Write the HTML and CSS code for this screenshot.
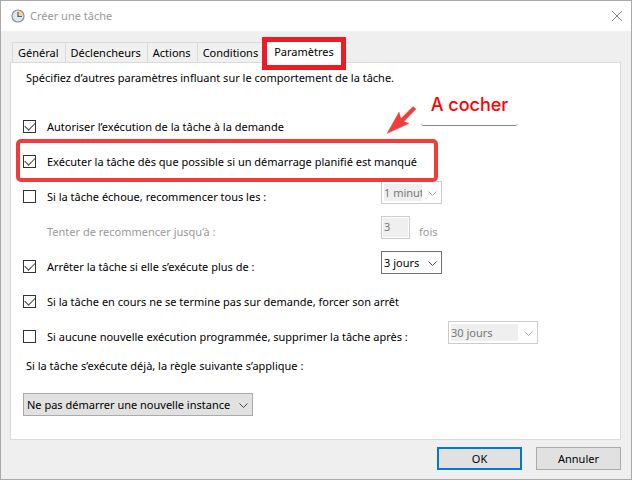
FILE: index.html
```html
<!DOCTYPE html>
<html lang="fr">
<head>
  <meta charset="UTF-8">
  <meta name="viewport" content="width=device-width, initial-scale=1.0">
  <title>Créer une tâche</title>
  <link rel="stylesheet" href="styles.css">
</head>
<body>

<main class="window">
  <header class="titlebar">
    <svg class="clock" viewBox="0 0 14 14" aria-hidden="true">
      <circle cx="7" cy="7" r="6" fill="#dce9f3" stroke="#8c8c8c" stroke-width="1.2"/>
      <path d="M7 7V2a5 5 0 0 1 5 5z" fill="#f6cf8c"/>
      <path d="M7 3v4.5h4" fill="none" stroke="#55606c" stroke-width="1.2"/>
    </svg>
    <h1>Créer une tâche</h1>
    <button class="close" type="button" aria-label="Fermer">
      <svg viewBox="0 0 10 10"><path d="M0 0l10 10M10 0L0 10" fill="none" stroke="#888" stroke-width="1"/></svg>
    </button>
  </header>

  <form class="content">
    <nav class="tabs">
      <button class="tab" type="button">Général</button>
      <button class="tab" type="button">Déclencheurs</button>
      <button class="tab" type="button">Actions</button>
      <button class="tab" type="button">Conditions</button>
      <button class="tab active" type="button">Paramètres</button>
    </nav>

    <section class="panel">
      <p class="intro">Spécifiez d’autres paramètres influant sur le comportement de la tâche.</p>

      <div class="row">
        <input type="checkbox" id="demande" checked>
        <label for="demande">Autoriser l’exécution de la tâche à la demande</label>
      </div>
      <div class="row marked">
        <input type="checkbox" id="possible" checked>
        <label for="possible">Exécuter la tâche dès que possible si un démarrage planifié est manqué</label>
      </div>
      <div class="row">
        <input type="checkbox" id="echoue">
        <label class="wide" for="echoue">Si la tâche échoue, recommencer tous les :</label>
        <span class="combo off">
          <select aria-label="Intervalle" disabled><option>1 minute</option></select>
          <svg viewBox="0 0 9 5"><path d="M.5.5l4 4 4-4"/></svg>
        </span>
      </div>
      <div class="row indent">
        <label class="wide muted" for="essais">Tenter de recommencer jusqu’à :</label>
        <input class="count" type="text" id="essais" value="3" disabled>
        <span class="muted">fois</span>
      </div>
      <div class="row">
        <input type="checkbox" id="arreter" checked>
        <label class="wide" for="arreter">Arrêter la tâche si elle s’exécute plus de :</label>
        <span class="combo">
          <select aria-label="Durée"><option>3 jours</option></select>
          <svg viewBox="0 0 9 5"><path d="M.5.5l4 4 4-4"/></svg>
        </span>
      </div>
      <div class="row">
        <input type="checkbox" id="forcer" checked>
        <label for="forcer">Si la tâche en cours ne se termine pas sur demande, forcer son arrêt</label>
      </div>
      <div class="row">
        <input type="checkbox" id="supprimer">
        <label class="wider" for="supprimer">Si aucune nouvelle exécution programmée, supprimer la tâche après :</label>
        <span class="combo off long">
          <select aria-label="Délai" disabled><option>30 jours</option></select>
          <svg viewBox="0 0 9 5"><path d="M.5.5l4 4 4-4"/></svg>
        </span>
      </div>

      <label class="rule-label" for="regle">Si la tâche s’exécute déjà, la règle suivante s’applique :</label>
      <span class="combo rule">
        <select id="regle"><option>Ne pas démarrer une nouvelle instance</option></select>
        <svg viewBox="0 0 9 5"><path d="M.5.5l4 4 4-4"/></svg>
      </span>

      <svg class="arrow" viewBox="0 0 32 28" aria-hidden="true">
        <path d="M2 27.5L14 6l2 6.5L28 .5l3 2.5-12 12.5 5 2z" fill="#f23c3c" stroke="#c96a6a" stroke-width=".5"/>
      </svg>
      <div class="note">A cocher</div>
    </section>

    <footer class="actions">
      <button class="btn default" type="submit">OK</button>
      <button class="btn" type="button">Annuler</button>
    </footer>
  </form>
</main>

</body>
</html>
```
FILE: styles.css
```css
* {
  box-sizing: border-box;
}

body {
  margin: 0;
  background: #efefef;
  color: #000;
  font-family: "Noto Sans", sans-serif;
  font-size: 11px;
  line-height: 16px;
}

button, input, select {
  margin: 0;
  font: inherit;
  color: inherit;
}

.window {
  min-height: 100vh;
  border: 1px solid #aaa;
  background: #efefef;
}

.titlebar {
  display: flex;
  align-items: center;
  height: 30px;
  padding: 0 9px 0 10px;
  background: #fff;
}

.titlebar h1 {
  flex: 1;
  margin: 0 0 0 5px;
  color: #999;
  font-size: 11px;
  font-weight: normal;
}

.clock {
  width: 14px;
  height: 14px;
}

.close {
  display: flex;
  padding: 0;
  border: 0;
  background: none;
}

.close svg {
  width: 10px;
  height: 10px;
}

.content {
  padding: 11px 10px 9px 9px;
}

.tabs {
  display: flex;
  align-items: flex-end;
  height: 20px;
  padding-left: 2px;
}

.tab {
  height: 20px;
  padding: 0 6px 0 5px;
  border: 1px solid #d9d9d9;
  border-width: 1px 0 0 1px;
  background: #f0f0f0;
  white-space: nowrap;
}

.tab.active {
  position: relative;
  z-index: 1;
  height: 33px;
  margin: 0 0 -8px -2px;
  padding: 0 7px 4px;
  border: 5px solid #ed1c24;
  background: #fff;
}

.panel {
  position: relative;
  height: 378px;
  padding: 7px 12px;
  border: 1px solid #d9d9d9;
  background: #fff;
}

.intro {
  margin: 0 0 23px 3px;
}

.row {
  position: relative;
  display: flex;
  align-items: center;
  height: 35px;
}

.row.indent {
  padding-left: 24px;
}

.row label {
  white-space: nowrap;
}

.row .wide {
  width: 334px;
}

.row .wider {
  width: 401px;
}

.row.marked {
  z-index: 1;
  width: fit-content;
}

/* red frame round the option to tick */
.row.marked::after {
  content: "";
  position: absolute;
  inset: -5px -21px -3px -7px;
  border: 4px solid #f23c3c;
  border-radius: 5px;
  pointer-events: none;
}

input[type="checkbox"] {
  appearance: none;
  width: 13px;
  height: 13px;
  margin-right: 11px;
  border: 1px solid #333;
  background: #fff;
}

input[type="checkbox"]:checked::before {
  content: "";
  display: block;
  width: 9px;
  height: 5px;
  margin: 1px;
  border: solid #444;
  border-width: 0 0 1px 1px;
  transform: rotate(-45deg);
}

.muted {
  color: #999;
}

.combo {
  position: relative;
  display: block;
  align-self: flex-start;
  width: 61px;
  height: 23px;
  margin-top: 2px;
  padding: 2px;
  border: 1px solid #707070;
  background: #fff;
}

.combo select {
  appearance: none;
  display: block;
  width: 38px;
  height: 17px;
  padding: 0;
  border: 0;
  background: none;
  line-height: 16px;
  opacity: 1;
  overflow: hidden;
}

.combo svg {
  position: absolute;
  top: 9px;
  right: 4px;
  width: 9px;
  height: 5px;
  fill: none;
  stroke: #444;
  pointer-events: none;
}

.combo.off {
  border-color: #ccc;
}

.combo.off select {
  background: #efefef;
  color: #777;
}

.combo.off svg {
  stroke: #aaa;
}

.combo.long {
  width: 90px;
}

.combo.long select {
  width: 67px;
}

.count {
  align-self: flex-start;
  width: 29px;
  height: 23px;
  margin: 2px 9px 0 0;
  padding: 0 2px 2px;
  border: 1px solid #ccc;
  background: #efefef;
  box-shadow: inset 0 0 0 1px #fff;
  color: #777;
}

.rule-label {
  display: block;
  margin: 4px 3px 19px;
}

.combo.rule {
  width: 230px;
  margin: 0;
  border-color: #aaa;
  background: #e1e1e1;
}

.combo.rule select {
  width: 212px;
  padding-left: 1px;
}

.arrow {
  position: absolute;
  top: 43px;
  left: 374px;
  width: 32px;
  height: 28px;
}

.note {
  position: absolute;
  top: 22px;
  left: 410px;
  width: 97px;
  height: 41px;
  padding-top: 8px;
  border-bottom: 1px solid #888;
  border-radius: 3px;
  color: #f00;
  font-family: Inter, sans-serif;
  font-size: 18px;
  font-weight: 500;
  line-height: 24px;
  text-align: center;
}

.actions {
  display: flex;
  justify-content: flex-end;
  gap: 14px;
  padding-top: 7px;
}

.btn {
  width: 85px;
  height: 23px;
  padding: 0;
  border: 1px solid #aaa;
  background: #e1e1e1;
}

.btn.default {
  border: 2px solid #0078d7;
}
```
